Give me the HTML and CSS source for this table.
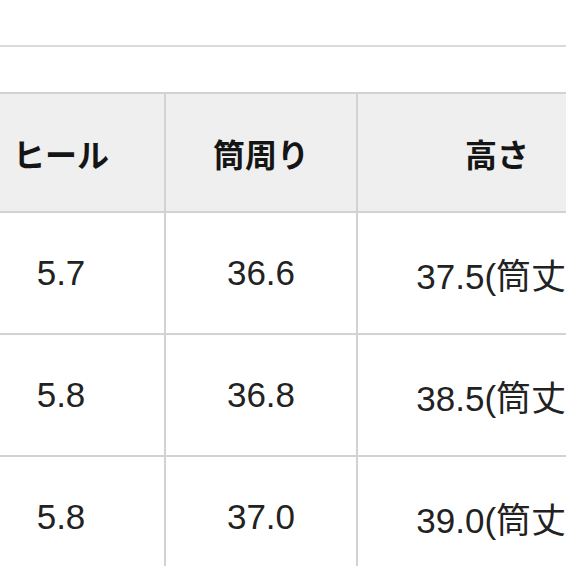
FILE: index.html
```html
<!DOCTYPE html>
<html lang="ja">
<head>
<meta charset="utf-8">
<link rel="stylesheet" href="styles.css">
</head>
<body>
<div class="page">
  <div class="topbar"></div>
  <table class="sizes">
    <colgroup>
      <col class="c1">
      <col class="c2">
      <col class="c3">
    </colgroup>
    <thead>
      <tr><th>ヒール</th><th>筒周り</th><th>高さ</th></tr>
    </thead>
    <tbody>
      <tr><td>5.7</td><td>36.6</td><td>37.5(筒丈)</td></tr>
      <tr><td>5.8</td><td>36.8</td><td>38.5(筒丈)</td></tr>
      <tr><td>5.8</td><td>37.0</td><td>39.0(筒丈)</td></tr>
    </tbody>
  </table>
</div>
</body>
</html>
```

FILE: styles.css
```css
html, body {
  margin: 0;
  padding: 0;
  background: #ffffff;
  overflow: hidden;
}

.page {
  width: 566px;
  height: 566px;
  overflow: hidden;
}

.topbar {
  height: 45px;
  border-bottom: 2px solid #dadada;
  margin-bottom: 45px;
}

.sizes {
  border-collapse: collapse;
  table-layout: fixed;
  width: 680px;
  margin-left: -44px;
  font-family: "Liberation Sans", "Noto Sans CJK JP", sans-serif;
}

.c1 { width: 208px; }
.c2 { width: 192px; }
.c3 { width: 280px; }

.sizes th,
.sizes td {
  border: 2px solid #d2d2d2;
  text-align: center;
  vertical-align: middle;
  white-space: nowrap;
  padding: 0;
}

.sizes th {
  height: 117px;
  background: #efefef;
  font-family: "Noto Sans CJK JP", sans-serif;
  font-weight: 700;
  font-size: 32px;
  color: #151515;
}

.sizes td {
  height: 120px;
  font-size: 35px;
  color: #222222;
}
```
